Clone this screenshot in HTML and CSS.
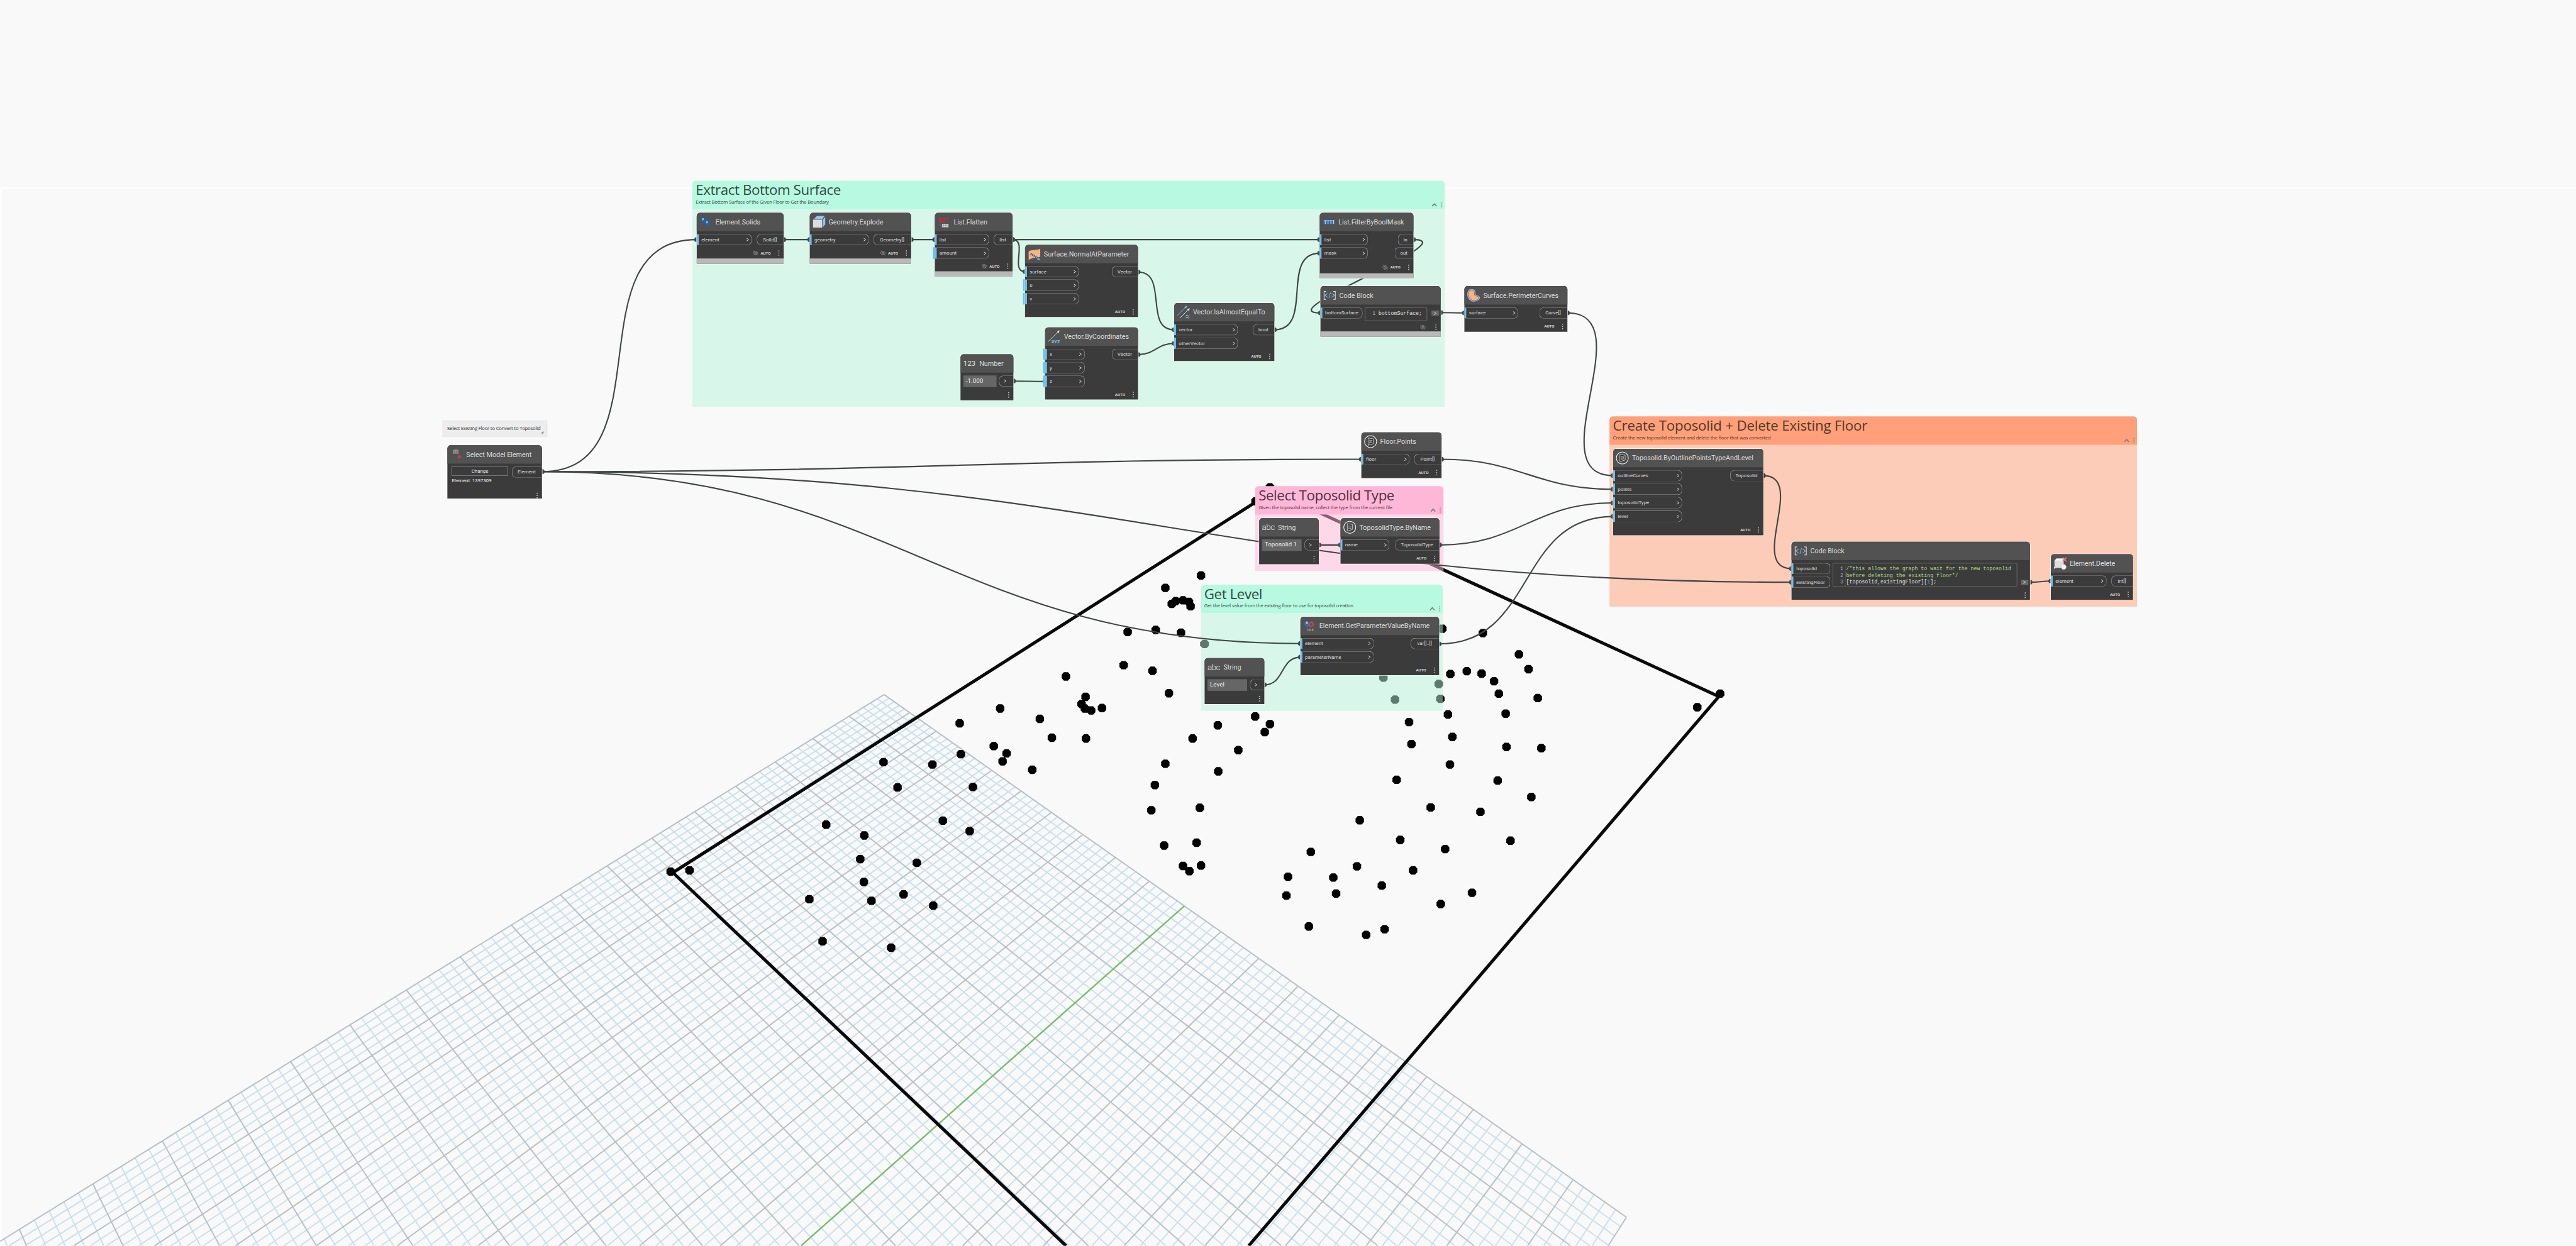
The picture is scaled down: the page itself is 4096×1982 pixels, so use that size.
FILE: index.html
```html
<!DOCTYPE html>
<html lang="en">
<head>
<meta charset="utf-8">
<title>Floor to Toposolid</title>
<link rel="stylesheet" href="styles.css">
</head>
<body>
<svg class="sprite" aria-hidden="true">
  <symbol id="i-solids" viewBox="0 0 32 32">
    <ellipse cx="10" cy="12" rx="6" ry="7" fill="#1f62ad"/><ellipse cx="8.5" cy="9" rx="2.4" ry="3" fill="#8fc0ec"/>
    <ellipse cx="20" cy="19" rx="6" ry="7" fill="#1f62ad"/><ellipse cx="18.5" cy="16.5" rx="2.4" ry="3" fill="#8fc0ec"/>
  </symbol>
  <symbol id="i-cube" viewBox="0 0 32 32">
    <path d="M1 10h23v20H1z" fill="#dcdcdc"/><path d="M5 7 11 1h19l-5 7H5z" fill="#8accff"/>
    <path d="M26 10 32 3v18l-6 8z" fill="#8accff"/><path d="M0 8v23" stroke="#222" stroke-width="1" stroke-dasharray="1 1"/>
  </symbol>
  <symbol id="i-flatten" viewBox="0 0 32 32">
    <path d="M4 6h14v12H4z" fill="#b23a3f"/><path d="M4 10h14M4 14h14M9 6v12M14 6v12" stroke="#7d3236"/>
    <path d="M20 7h5v7" fill="none" stroke="#b23a3f" stroke-width="1.6"/>
    <path d="M5 20q0 6 6 6" fill="none" stroke="#3c6c98" stroke-width="2.4"/>
    <path d="M11 21h16v8H11z" fill="#d8d8d8"/><path d="M11 25h16M15 21v8M19 21v8M23 21v8" stroke="#777" stroke-width=".8"/>
  </symbol>
  <symbol id="i-normal" viewBox="0 0 32 32">
    <path d="M2 10C8 4 20 8 31 3v20C20 26 10 25 2 31z" fill="#f8b283"/>
    <path d="M7 15 27 28" stroke="#234" stroke-width="4"/><path d="M7 15 25 27" stroke="#6fb8ea" stroke-width="2"/>
    <path d="m31 31-8-1 4-6z" fill="#6fb8ea"/>
  </symbol>
  <symbol id="i-almost" viewBox="0 0 32 32">
    <path d="M0 25 22 3" stroke="#7cc4f4" stroke-width="1.4"/><path d="m25 0-7 3 5 4z" fill="#7cc4f4"/>
    <path d="M7 31 29 9" stroke="#eee" stroke-width="1.4"/><path d="m32 6-7 3 5 4z" fill="#eee"/>
    <path d="M22 25q2-2 4.500 0t4.500 0M22 30q2-2 4.500 0t4.500 0" fill="none" stroke="#7cc4f4" stroke-width="1.8"/>
  </symbol>
  <symbol id="i-mask" viewBox="0 0 32 32">
    <path d="M3 12h26v9H3z" fill="#2f6dab"/><path d="M3 12h26" stroke="#7aa9d6" stroke-width="2"/>
    <path d="M7 12v9M14 12v9M21 12v9M28 12v9" stroke="#dfe9f3" stroke-width="1.6"/>
  </symbol>
  <symbol id="i-code" viewBox="0 0 32 32">
    <path d="M7 6H2v20h5M25 6h5v20h-5" fill="none" stroke="#f1e6d6" stroke-width="1.6"/>
    <path d="m11 11-7 5 7 5M21 11l7 5-7 5M18 9l-4 14" fill="none" stroke="#79bdf0" stroke-width="1.6"/>
  </symbol>
  <symbol id="i-perimeter" viewBox="0 0 32 32">
    <path d="M11 1c9 0 9 6 9 12 0 5 11 2 11 9 0 5-8 9-14 9C7 31 1 22 1 14 1 7 4 1 11 1z" fill="#f8b283" stroke="#79bdf0" stroke-width="1.6"/>
    <path d="M11 3c7 0 7 5 7 10 0 7 11 3 11 9 0 4-7 7-12 7C9 29 3 21 3 14 3 8 5 3 11 3z" fill="none" stroke="#3c4a55" stroke-width="1"/>
  </symbol>
  <symbol id="i-select" viewBox="0 0 32 32">
    <path d="M9 4h10l2 3v7H7V7z" fill="#a5a5a5"/><path d="M7 7h14M7 10.500h14M12 4v3M17 4v3M10 7v3.500M15 7v3.500M19 7v3.500M12 10.500V14M17 10.500V14" stroke="#555" stroke-width=".9"/>
    <path d="m20 16 9 7-4 1-5 4z" fill="#c93d45"/>
  </symbol>
  <symbol id="i-package" viewBox="0 0 32 32">
    <circle cx="16" cy="16" r="15" fill="#4a4a4a" stroke="#f2f2f2" stroke-width="1.8"/>
    <path d="m10 7 13 2v12l-13 4z" fill="#2c2c2c" stroke="#ddd" stroke-width="1.3"/>
    <path d="m12 12 9 1M12 20l9-2M14 12v8M19 13v5M16.500 13v6" stroke="#ccc" stroke-width="1.1"/>
  </symbol>
  <symbol id="i-delete" viewBox="0 0 32 32">
    <path d="m2 9 5-5h18v18l-4 5H2z" fill="#dedede"/><path d="m2 9 5-5h18l-4 5z" fill="#f5f5f5"/>
    <circle cx="25" cy="25" r="6.500" fill="#f2f2f2" stroke="#bbb" stroke-width=".6"/>
    <path d="m23 1 9 10M32 1l-9 10" stroke="#ef6a72" stroke-width="3"/><path d="M1 25h3v4H1z" fill="#eee"/>
  </symbol>
  <symbol id="i-eye" viewBox="0 0 16 16">
    <path d="M1 8q7-10 14 0-7 10-14 0zM1.500 1.500l13 13" fill="none" stroke="#aaa" stroke-width="1"/><circle cx="8" cy="8" r="2.600" fill="none" stroke="#aaa" stroke-width="1"/>
  </symbol>
  <symbol id="i-chev" viewBox="0 0 8 10"><path d="m1.500 1.500 5 3.500-5 3.500" fill="none" stroke="#e6e6e6" stroke-width="1.500"/></symbol>
  <symbol id="i-up" viewBox="0 0 14 10"><path d="m1.500 8.500 5.500-6 5.500 6" fill="none" stroke="currentColor" stroke-width="2.600"/></symbol>
  <symbol id="i-rings" viewBox="0 0 4 14"><g fill="none" stroke="currentColor" stroke-width=".8"><circle cx="2" cy="2" r="1.400"/><circle cx="2" cy="7" r="1.400"/><circle cx="2" cy="12" r="1.400"/></g></symbol>
  <symbol id="i-dots" viewBox="0 0 4 16"><g fill="#bdbdbd"><circle cx="2" cy="2" r="1.600"/><circle cx="2" cy="8" r="1.600"/><circle cx="2" cy="14" r="1.600"/></g></symbol>
  <symbol id="i-pin" viewBox="0 0 10 10"><path d="m6 0 4 4-2 .5L6 7l-.5 2L3.500 7 .5 9.500 2.500 6.500.8 4.500 3 4l2.500-2z" fill="#999"/></symbol>
</svg>

<div class="window">
<main class="workspace">
  <svg class="preview" viewBox="0 0 6426 3109">
    <g id="grid"></g>
    <path class="outline" d="M2659.300 3109 1678.600 2177.600 3175 1226 4287.800 1738 3115 3109"/>
    <g id="points"></g>
  </svg>

  <section class="group mint g-extract">
    <header><h2>Extract Bottom Surface</h2><p>Extract Bottom Surface of the Given Floor to Get the Boundary</p>
      <div class="tools"><svg class="up"><use href="#i-up"/></svg><svg class="rings"><use href="#i-rings"/></svg></div></header>
  </section>
  <section class="group pink g-type">
    <header><h2>Select Toposolid Type</h2><p>Given the toposolid name, collect the type from the current file</p>
      <div class="tools"><svg class="up"><use href="#i-up"/></svg><svg class="rings"><use href="#i-rings"/></svg></div></header>
  </section>
  <section class="group mint g-level">
    <header><h2>Get Level</h2><p>Get the level value from the existing floor to use for toposolid creation</p>
      <div class="tools"><svg class="up"><use href="#i-up"/></svg><svg class="rings"><use href="#i-rings"/></svg></div></header>
  </section>
  <section class="group orange g-create">
    <header><h2>Create Toposolid + Delete Existing Floor</h2><p>Create the new toposolid element and delete the floor that was converted</p>
      <div class="tools"><svg class="up"><use href="#i-up"/></svg><svg class="rings"><use href="#i-rings"/></svg></div></header>
  </section>

  <svg class="wires" viewBox="0 0 6426 3109" id="wires"></svg>

  <aside class="note">Select Existing Floor to Convert to Toposolid<svg><use href="#i-pin"/></svg></aside>

  <article class="node n-select">
    <header><svg><use href="#i-select"/></svg><h3>Select Model Element</h3></header>
    <div class="body">
      <div class="picker"><button>Change</button><span>Element: 1397309</span></div>
      <div class="outs"><span class="out">Element</span></div>
    </div>
    <footer><svg class="dots"><use href="#i-dots"/></svg></footer>
  </article>

  <article class="node n-solids">
    <header><svg><use href="#i-solids"/></svg><h3>Element.Solids</h3></header>
    <div class="body">
      <div class="ins"><span class="in">element<svg><use href="#i-chev"/></svg></span></div>
      <div class="outs"><span class="out">Solid[]</span></div>
    </div>
    <footer><svg class="eye"><use href="#i-eye"/></svg><b>AUTO</b><svg class="dots"><use href="#i-dots"/></svg></footer>
    <div class="hidden-bar"></div>
  </article>

  <article class="node n-explode">
    <header><svg><use href="#i-cube"/></svg><h3>Geometry.Explode</h3></header>
    <div class="body">
      <div class="ins"><span class="in">geometry<svg><use href="#i-chev"/></svg></span></div>
      <div class="outs"><span class="out">Geometry[]</span></div>
    </div>
    <footer><svg class="eye"><use href="#i-eye"/></svg><b>AUTO</b><svg class="dots"><use href="#i-dots"/></svg></footer>
    <div class="hidden-bar"></div>
  </article>

  <article class="node n-flatten">
    <header><svg><use href="#i-flatten"/></svg><h3>List.Flatten</h3></header>
    <div class="body">
      <div class="ins"><span class="in">list<svg><use href="#i-chev"/></svg></span><span class="in default">amount<svg><use href="#i-chev"/></svg></span></div>
      <div class="outs"><span class="out">list</span></div>
    </div>
    <footer><svg class="eye"><use href="#i-eye"/></svg><b>AUTO</b><svg class="dots"><use href="#i-dots"/></svg></footer>
    <div class="hidden-bar"></div>
  </article>

  <article class="node n-normal">
    <header><svg><use href="#i-normal"/></svg><h3>Surface.NormalAtParameter</h3></header>
    <div class="body">
      <div class="ins"><span class="in">surface<svg><use href="#i-chev"/></svg></span><span class="in default">u<svg><use href="#i-chev"/></svg></span><span class="in default">v<svg><use href="#i-chev"/></svg></span></div>
      <div class="outs"><span class="out">Vector</span></div>
    </div>
    <footer><b>AUTO</b><svg class="dots"><use href="#i-dots"/></svg></footer>
  </article>

  <article class="node n-coords">
    <header>
      <svg viewBox="0 0 32 32"><path d="M0 29 27 3" stroke="#eee" stroke-width="1.3"/><path d="m29 0-6 4 4 4z" fill="#eee"/><text x="9" y="32" class="icon-xyz">XYZ</text></svg>
      <h3>Vector.ByCoordinates</h3>
    </header>
    <div class="body">
      <div class="ins"><span class="in default">x<svg><use href="#i-chev"/></svg></span><span class="in default">y<svg><use href="#i-chev"/></svg></span><span class="in default">z<svg><use href="#i-chev"/></svg></span></div>
      <div class="outs"><span class="out">Vector</span></div>
    </div>
    <footer><b>AUTO</b><svg class="dots"><use href="#i-dots"/></svg></footer>
  </article>

  <article class="node n-number">
    <header><i class="glyph">123</i><h3>Number</h3></header>
    <div class="body">
      <div class="value">-1.000</div>
      <div class="outs"><span class="out arrow"><svg><use href="#i-chev"/></svg></span></div>
    </div>
    <footer><svg class="dots"><use href="#i-dots"/></svg></footer>
  </article>

  <article class="node n-almost">
    <header><svg><use href="#i-almost"/></svg><h3>Vector.IsAlmostEqualTo</h3></header>
    <div class="body">
      <div class="ins"><span class="in">vector<svg><use href="#i-chev"/></svg></span><span class="in">otherVector<svg><use href="#i-chev"/></svg></span></div>
      <div class="outs"><span class="out">bool</span></div>
    </div>
    <footer><b>AUTO</b><svg class="dots"><use href="#i-dots"/></svg></footer>
  </article>

  <article class="node n-mask">
    <header><svg><use href="#i-mask"/></svg><h3>List.FilterByBoolMask</h3></header>
    <div class="body">
      <div class="ins"><span class="in">list<svg><use href="#i-chev"/></svg></span><span class="in">mask<svg><use href="#i-chev"/></svg></span></div>
      <div class="outs"><span class="out">in</span><span class="out">out</span></div>
    </div>
    <footer><svg class="eye"><use href="#i-eye"/></svg><b>AUTO</b><svg class="dots"><use href="#i-dots"/></svg></footer>
    <div class="hidden-bar"></div>
  </article>

  <article class="node code n-code1">
    <header><svg><use href="#i-code"/></svg><h3>Code Block</h3></header>
    <div class="body">
      <div class="ins"><span class="in">bottomSurface</span></div>
      <pre class="editor single"><span><i>1</i>bottomSurface;</span></pre>
      <span class="slot"><svg><use href="#i-chev"/></svg></span>
    </div>
    <footer><svg class="eye"><use href="#i-eye"/></svg><svg class="dots"><use href="#i-dots"/></svg></footer>
    <div class="hidden-bar"></div>
  </article>

  <article class="node n-perimeter">
    <header><svg><use href="#i-perimeter"/></svg><h3>Surface.PerimeterCurves</h3></header>
    <div class="body">
      <div class="ins"><span class="in">surface<svg><use href="#i-chev"/></svg></span></div>
      <div class="outs"><span class="out">Curve[]</span></div>
    </div>
    <footer><b>AUTO</b><svg class="dots"><use href="#i-dots"/></svg></footer>
  </article>

  <article class="node n-points">
    <header><svg><use href="#i-package"/></svg><h3>Floor.Points</h3></header>
    <div class="body">
      <div class="ins"><span class="in">floor<svg><use href="#i-chev"/></svg></span></div>
      <div class="outs"><span class="out">Point[]</span></div>
    </div>
    <footer><b>AUTO</b><svg class="dots"><use href="#i-dots"/></svg></footer>
  </article>

  <article class="node n-string1">
    <header><i class="glyph abc">abc</i><h3>String</h3></header>
    <div class="body">
      <div class="value">Toposolid 1</div>
      <div class="outs"><span class="out arrow"><svg><use href="#i-chev"/></svg></span></div>
    </div>
    <footer><svg class="dots"><use href="#i-dots"/></svg></footer>
  </article>

  <article class="node n-type">
    <header><svg><use href="#i-package"/></svg><h3>ToposolidType.ByName</h3></header>
    <div class="body">
      <div class="ins"><span class="in">name<svg><use href="#i-chev"/></svg></span></div>
      <div class="outs"><span class="out">ToposolidType</span></div>
    </div>
    <footer><b>AUTO</b><svg class="dots"><use href="#i-dots"/></svg></footer>
  </article>

  <article class="node n-param">
    <header>
      <svg viewBox="0 0 32 32"><circle cx="10" cy="12" r="7" fill="#2a6bb5"/><circle cx="9" cy="8" r="3" fill="#9cc8ee"/><circle cx="20" cy="12" r="5.500" fill="none" stroke="#d8454c" stroke-width="3" stroke-dasharray="2.600 1"/><circle cx="20" cy="12" r="4" fill="none" stroke="#d8454c" stroke-width="1.500"/><text x="9" y="29" class="icon-num">12.3</text></svg>
      <h3>Element.GetParameterValueByName</h3>
    </header>
    <div class="body">
      <div class="ins"><span class="in">element<svg><use href="#i-chev"/></svg></span><span class="in">parameterName<svg><use href="#i-chev"/></svg></span></div>
      <div class="outs"><span class="out">var[]..[]</span></div>
    </div>
    <footer><b>AUTO</b><svg class="dots"><use href="#i-dots"/></svg></footer>
  </article>

  <article class="node n-string2">
    <header><i class="glyph abc">abc</i><h3>String</h3></header>
    <div class="body">
      <div class="value">Level</div>
      <div class="outs"><span class="out arrow"><svg><use href="#i-chev"/></svg></span></div>
    </div>
    <footer><svg class="dots"><use href="#i-dots"/></svg></footer>
  </article>

  <article class="node n-topo">
    <header><svg><use href="#i-package"/></svg><h3>Toposolid.ByOutlinePointsTypeAndLevel</h3></header>
    <div class="body">
      <div class="ins"><span class="in">outlineCurves<svg><use href="#i-chev"/></svg></span><span class="in">points<svg><use href="#i-chev"/></svg></span><span class="in">toposolidType<svg><use href="#i-chev"/></svg></span><span class="in">level<svg><use href="#i-chev"/></svg></span></div>
      <div class="outs"><span class="out">Toposolid</span></div>
    </div>
    <footer><b>AUTO</b><svg class="dots"><use href="#i-dots"/></svg></footer>
  </article>

  <article class="node code n-code2">
    <header><svg><use href="#i-code"/></svg><h3>Code Block</h3></header>
    <div class="body">
      <div class="ins"><span class="in">toposolid</span><span class="in">existingFloor</span></div>
      <pre class="editor"><span><i>1</i><em>/*this allows the graph to wait for the new toposolid</em></span><span><i>2</i><em>before deleting the existing floor*/</em></span><span><i>3</i>[toposolid,existingFloor][<var>1</var>];</span></pre>
      <span class="slot low"><svg><use href="#i-chev"/></svg></span>
    </div>
    <footer><svg class="dots"><use href="#i-dots"/></svg></footer>
  </article>

  <article class="node n-delete">
    <header><svg><use href="#i-delete"/></svg><h3>Element.Delete</h3></header>
    <div class="body">
      <div class="ins"><span class="in">element<svg><use href="#i-chev"/></svg></span></div>
      <div class="outs"><span class="out">int[]</span></div>
    </div>
    <footer><b>AUTO</b><svg class="dots"><use href="#i-dots"/></svg></footer>
  </article>
</main>
</div>
<script src="main.js"></script>
</body>
</html>
```

FILE: styles.css
```css
* { box-sizing: border-box; }

body {
  margin: 0;
  background: #f9f9f9;
  font-family: Roboto, "Noto Sans", sans-serif;
}

h2, h3, p, pre { margin: 0; font-weight: 400; }

.sprite { display: none; }

.window { width: 100vw; height: 100vh; overflow: hidden; contain: strict; }

.workspace {
  position: relative;
  width: 6426px;
  height: 3109px;
  transform: scale(0.63741);
  transform-origin: 0 0;
  overflow: hidden;
  background: linear-gradient(#fff, #fff) 0 468px / 100% 4px no-repeat,
              linear-gradient(#fff, #fff) 0 468px / 4px 100% no-repeat, #f9f9f9;
}

.preview, .wires { position: absolute; left: 0; top: 0; width: 6426px; height: 3109px; }

/* 3D preview */
.minor { stroke: #cbe0ec; stroke-width: 3.1; }
.major { stroke: #b7c2c8; stroke-width: 3.2; }
.axis { stroke: #74c06e; stroke-width: 3.8; }
.outline { fill: none; stroke: #0a0a0a; stroke-width: 8; }
.point { fill: #000; }

/* Groups */
.group { position: absolute; border-radius: 9px 9px 0 0; overflow: hidden; }
.group > header { position: relative; height: 71px; padding-left: 8.5px; color: #30483f; }
.group h2 {
  font: 400 35px/45.400px "Open Sans", "Noto Sans", sans-serif;
  letter-spacing: -0.65px;
  white-space: nowrap;
}
.group p {
  font: 400 12px/16px "Open Sans", "Noto Sans", sans-serif;
  letter-spacing: -0.27px;
  white-space: nowrap;
}
.tools { position: absolute; right: 6px; bottom: 4px; display: flex; align-items: center; gap: 9px; color: #7b7b7b; }
.tools .up { width: 14px; height: 10px; }
.tools .rings { width: 4px; height: 14px; }
.mint { background: rgba(183, 246, 220, .5); }
.mint > header { background: #b8f9e1; }
.pink { background: rgba(255, 184, 217, .51); }
.pink > header { background: #ffb7d8; color: #50323f; }
.orange { background: rgba(255, 160, 122, .51); }
.orange > header { background: #ffa07a; color: #503a28; }
.orange h2 { letter-spacing: -0.3px; }
.g-extract { left: 1727px; top: 451px; width: 1877px; height: 564px; }
.g-type { left: 3131px; top: 1213px; width: 470px; height: 212px; }
.g-level { left: 2995.500px; top: 1459px; width: 603.500px; height: 315px; }
.g-create { left: 4015px; top: 1039px; width: 1316px; height: 474.500px; }

/* Connectors */
.wire { fill: none; stroke: #404643; stroke-width: 3.300; }
.plug { fill: #444; }

.note {
  position: absolute;
  left: 1105px; top: 1051px; width: 259px; height: 39px;
  padding: 10px 0 0 10.500px;
  background: #ededed;
  box-shadow: 0 0 2px 1px rgba(0, 0, 0, .12);
  font: 400 12px/16px "Open Sans", "Noto Sans", sans-serif;
  letter-spacing: -0.27px;
  white-space: nowrap;
  color: #2b2b2b;
}
.note svg { position: absolute; right: 6px; bottom: 5px; width: 9px; height: 10px; }

/* Nodes */
.node {
  position: absolute;
  background: #3b3b3b;
  border-radius: 8px 8px 0 0;
  box-shadow: 0 0 0 1.200px rgba(255, 255, 255, .85);
  color: #dcdcdc;
}
.node > header {
  height: 46px;
  padding-left: 7px;
  display: flex;
  align-items: center;
  gap: 8px;
  background: #525252;
  border-radius: 8px 8px 0 0;
}
.node > header svg { flex: none; width: 32px; height: 32px; overflow: visible; }
.node h3 { font-size: 16.900px; line-height: 22px; white-space: nowrap; }
.glyph { width: 32px; font-style: normal; font-size: 18px; line-height: 22px; color: #e8e8e8; }
.glyph.abc { font-size: 21px; font-weight: 300; letter-spacing: -0.800px; }
.icon-xyz { font: 700 11.500px Roboto, sans-serif; fill: #7cc4f4; }
.icon-num { font: 500 8.500px Roboto, sans-serif; fill: #ccc; }

.body { display: flex; justify-content: space-between; padding-top: 6.500px; }
.ins, .outs { display: flex; flex-direction: column; gap: 5.200px; }
.outs { align-items: flex-end; margin-left: auto; }
.in, .out {
  display: flex;
  align-items: center;
  height: 28.800px;
  border: 1.200px solid #a2a2a2;
  font-size: 12.500px;
  line-height: 16px;
  white-space: nowrap;
}
.in {
  position: relative;
  width: var(--in);
  justify-content: space-between;
  padding: 0 5.500px 0 6.500px;
  border-left: 5px solid #6cc0e8;
  border-radius: 0 11px 11px 0;
}
.in svg, .arrow svg, .slot svg { width: 8px; height: 10px; }
.in.default::before {
  content: "";
  position: absolute;
  left: -10px; top: -1px; bottom: -1px;
  width: 4px;
  background: #6cc0e8;
}
.out {
  min-width: var(--out);
  padding-left: 12.500px;
  padding-right: 15px;
  justify-content: center;
  border-right: 0;
  border-radius: 11px 0 0 11px;
}
.arrow { padding: 0 6px 0 0; }
.value {
  width: var(--value);
  height: 29px;
  margin-left: 6.500px;
  padding-left: 7px;
  background: #666;
  font-size: 15.500px;
  line-height: 27px;
  white-space: nowrap;
  color: #eee;
}
.node > footer {
  height: var(--foot, 33px);
  padding: 6px 10.500px 0 0;
  display: flex;
  align-items: center;
  justify-content: flex-end;
}
.node > footer b { font-size: 9.700px; font-weight: 500; line-height: 14px; color: #eee; }
.eye { width: 15px; height: 15px; margin-right: 5px; }
.dots { width: 4px; height: 15px; margin-left: 18px; }
.hidden-bar { height: 12.500px; background: #b9b9b9; }

.picker { padding-left: 11.300px; display: flex; flex-direction: column; gap: 4px; font-size: 12.300px; color: #eee; }
.picker button {
  width: 139.500px; height: 23.500px; padding: 0;
  background: none; border: 1px solid #9a9a9a;
  font: inherit; color: inherit;
}
.picker span { line-height: 18px; height: 24px; }

.code .in { padding-right: 0; }
.editor {
  width: var(--editor);
  margin-left: 5.500px;
  padding: 6.500px 0 0 18px;
  border: 1px solid #858585;
  border-radius: 3px;
  font: 400 12.950px/16.700px "Liberation Mono", monospace;
  color: #e2e2e2;
}
.editor.single { height: 34px; padding-top: 7.500px; }
.editor span { display: flex; }
.editor i { width: 13px; margin-right: 2px; font-style: normal; color: #a8a8a8; border-right: 1px dotted #777; }
.editor.single i { border: 0; }
.editor em { font-style: normal; color: #b9d98a; }
.editor var { font-style: normal; color: #5ea9dd; }
.slot { width: 19px; height: 13px; margin: 8.500px 4.500px 0 auto; display: flex; align-items: center; justify-content: center; background: #666; }
.slot.low { margin-top: 42px; }

.n-select { left: 1116px; top: 1111px; width: 236px; height: 133px; --out: 75px; }
.n-solids { left: 1738px; top: 531px; width: 217px; --in: 137px; --out: 67px; }
.n-explode { left: 2020px; top: 531px; width: 253px; --in: 147px; --out: 94px; }
.n-flatten { left: 2332px; top: 531px; width: 194px; --in: 135px; --out: 47px; --foot: 31px; }
.n-normal { left: 2557px; top: 611px; width: 282px; --in: 134px; --out: 65px; --foot: 31px; }
.n-coords { left: 2607px; top: 817px; width: 232px; --in: 98.500px; --out: 65px; --foot: 30.500px; }
.n-number { left: 2396px; top: 884px; width: 132px; --value: 83.500px; --out: 36.500px; }
.n-almost { left: 2929px; top: 756px; width: 250px; --in: 159px; --out: 54px; --foot: 30px; }
.n-mask { left: 3292px; top: 531px; width: 234px; --in: 120px; --out: 39px; --foot: 35.500px; }
.n-code1 { left: 3294px; top: 714px; width: 300px; --in: 105px; --editor: 155px; }
.n-perimeter { left: 3653px; top: 714px; width: 257px; --in: 134px; --out: 70px; }
.n-points { left: 3396px; top: 1079px; width: 200px; --in: 120px; --out: 68.500px; }
.n-string1 { left: 3141px; top: 1293px; width: 149px; --value: 99px; --out: 36.500px; }
.n-type { left: 3344px; top: 1293px; width: 247px; --in: 122px; --out: 111px; }
.n-param { left: 3244px; top: 1539px; width: 346px; --in: 182.500px; --out: 71.500px; --foot: 31px; }
.n-string2 { left: 3005px; top: 1642px; width: 149px; --value: 99px; --out: 36.500px; }
.n-topo { left: 4024px; top: 1120px; width: 375px; --in: 172px; --out: 83px; }
.n-code2 { left: 4469px; top: 1352px; width: 595px; --in: 97px; --editor: 460px; --foot: 30px; }
.n-code2 .editor { height: 59px; }
.n-delete { left: 5116px; top: 1383px; width: 205px; --in: 138.500px; --out: 54px; }
.n-code1 .body { height: 46px; }
.n-code1 > footer { height: 21px; padding-top: 0; }
.n-select > footer { padding-top: 9px; }
```

FILE: main.js
```js
const NS = "http://www.w3.org/2000/svg";

function add(parent, tag, attrs) {
  const el = document.createElementNS(NS, tag);
  for (const k in attrs) el.setAttribute(k, attrs[k]);
  parent.appendChild(el);
  return el;
}

const WIDTH = 6426;
const HEIGHT = 3109;

// Cuts a segment to the canvas; null when it lies wholly outside.
function clip([x1, y1], [x2, y2]) {
  let t0 = 0;
  let t1 = 1;
  const dx = x2 - x1;
  const dy = y2 - y1;
  for (const [p, q] of [[-dx, x1], [dx, WIDTH - x1], [-dy, y1], [dy, HEIGHT - y1]]) {
    if (p === 0) {
      if (q < 0) return null;
    } else if (p < 0) {
      t0 = Math.max(t0, q / p);
    } else {
      t1 = Math.min(t1, q / p);
    }
  }
  if (t0 >= t1) return null;
  return { x1: x1 + t0 * dx, y1: y1 + t0 * dy, x2: x1 + t1 * dx, y2: y1 + t1 * dy };
}

// Ground plane: 20 x 20 major cells, 5 minor cells each, seen in perspective.
function project(u, v) {
  const w = 1 - 0.01922 * u - 0.01604 * v;
  return [
    (2205.4 - 127.81 * u + 27.516 * v) / w,
    (1733.3 + 19.54 * u + 16.495 * v) / w,
  ];
}

const grid = document.getElementById("grid");
function gridLine(a, b, cls) {
  const line = clip(project(...a), project(...b));
  if (line) add(grid, "line", { ...line, class: cls });
}
for (const major of [false, true]) {
  for (let i = 0; i <= 100; i++) {
    if ((i % 5 === 0) !== major) continue;
    const t = i / 5;
    const cls = major ? "major" : "minor";
    gridLine([t, 0], [t, 20], cls);
    gridLine([0, t], [20, t], i === 50 ? "axis" : cls);
  }
}

const points = [
  [2996,1436],[2907,1467],[2923,1507],[2933,1500],[2951,1498],[2966,1502],[2970,1513],[2813,1577],[2883,1572],
  [2946,1579],[3005,1607],[2803,1660],[2875,1674],[2916,1730],[3131,1788],[3168,1807],[3155,1827],[3038,1810],
  [2975,1843],[3089,1872],[2907,1906],[3039,1925],[2881,1959],[2872,2022],[2993,2016],[2904,2110],[2985,2103],
  [2951,2161],[2967,2174],[2996,2160],[3598,1569],[3699,1580],[3789,1633],[3813,1670],[3618,1682],[3659,1675],
  [3696,1681],[3727,1700],[3739,1731],[3836,1742],[3589,1707],[3593,1744],[3451,1691],[3480,1746],[3612,1783],
  [3515,1802],[3756,1781],[3521,1857],[3623,1839],[3758,1864],[3845,1867],[3617,1908],[3484,1946],[3736,1948],
  [3820,1989],[3569,2015],[3693,2026],[3392,2047],[3493,2096],[3768,2098],[3605,2119],[3270,2126],[3385,2162],
  [3525,2172],[3213,2188],[3326,2190],[3447,2210],[3209,2235],[3333,2230],[3672,2228],[3594,2256],[3265,2312],
  [3408,2333],[3454,2319],[4291,1731],[4234,1765],[2659,1688],[2708,1739],[2698,1757],[2706,1768],[2722,1773],
  [2749,1767],[2495,1768],[2394,1805],[2594,1794],[2624,1841],[2709,1843],[2479,1862],[2511,1880],[2501,1900],
  [2575,1921],[2397,1882],[2326,1908],[2204,1902],[2239,1965],[2427,1964],[2352,2048],[2419,2074],[2061,2058],
  [2156,2085],[2146,2144],[2287,2153],[2155,2201],[2019,2244],[2174,2248],[2254,2232],[2328,2260],[2052,2349],
  [2223,2365],[1720,2172],[1673,2175],[3168,1216],[3132,1251],
];
const cloud = document.getElementById("points");
for (const [x, y] of points) {
  add(cloud, "path", { class: "point", d: `M${x - 5} ${y - 10.5}h10l5.5 6v9l-5.5 6h-10l-5.5 -6v-9z` });
}

// Connectors run from an output port to an input port.
const wires = [
  [1352,1177,1738,598],[1352,1177,3396,1146],[1352,1177,4469,1453],[1352,1177,3244,1606],
  [1955,598,2020,598],[2273,598,2332,598],[2526,598,3292,598],[2526,598,2557,678],
  [2839,679,2929,823],[2839,885,2929,857],[2528,951,2607,952],[3179,823,3292,632],
  [3526,598,3294,781],[3594,780,3653,781],[3910,781,4024,1187],[3596,1146,4024,1221],
  [3591,1360,4024,1255],[3590,1607,4024,1289],[3290,1360,3344,1360],[3154,1709,3244,1640],
  [4399,1187,4469,1419],[5064,1453,5116,1450],
];
const layer = document.getElementById("wires");
for (const [x0, y0, x1, y1] of wires) {
  const reach = 0.45 * Math.hypot(x1 - x0, y1 - y0);
  add(layer, "path", { class: "wire", d: `M${x0} ${y0}C${x0 + reach} ${y0} ${x1 - reach} ${y1} ${x1} ${y1}` });
  add(layer, "circle", { class: "plug", cx: x0, cy: y0, r: 6 });
  add(layer, "circle", { class: "plug", cx: x1, cy: y1, r: 6 });
}
```
